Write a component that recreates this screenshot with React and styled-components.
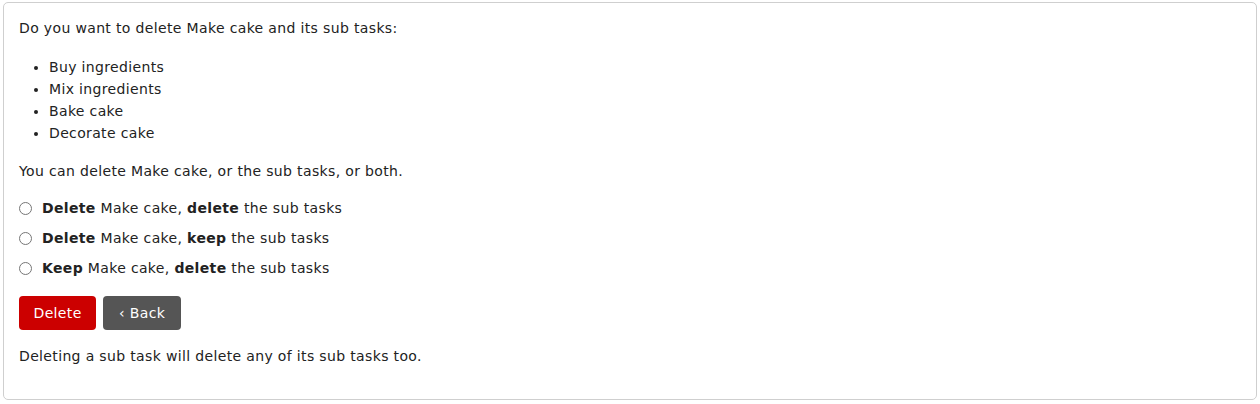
import React from "react";
import styled, { createGlobalStyle } from "styled-components";

const GlobalStyle = createGlobalStyle`
  body {
    margin: 0;
    background: #fff;
    font-family: "DejaVu Sans", "Open Sans", sans-serif;
    font-size: 14px;
    letter-spacing: 0.35px;
    color: #222;
  }
`;

const Card = styled.div`
  margin: 2px 3px 0 3px;
  border: 1px solid #cfcfcf;
  border-radius: 5px;
  padding: 14px 15px 16px;
`;

const Text = styled.p`
  margin: 0 0 ${(p) => p.$gap || 16}px;
  line-height: 22px;
`;

const TaskList = styled.ul`
  margin: 0 0 16px;
  padding-left: 30px;
  line-height: 22px;
`;

const Options = styled.div`
  display: flex;
  flex-direction: column;
  gap: 8px;
  margin-bottom: 17px;
`;

const Option = styled.label`
  display: flex;
  align-items: center;
  line-height: 22px;
  gap: 10px;

  input {
    margin: 0;
    width: 13px;
    height: 13px;
  }
`;

const Actions = styled.div`
  display: flex;
  gap: 7px;
  margin-bottom: 15px;
`;

const Button = styled.button`
  height: 34px;
  padding: 0 ${(p) => (p.$variant === "danger" ? 14.5 : 16)}px;
  border: none;
  border-radius: 4px;
  font-family: inherit;
  font-size: 14px;
  letter-spacing: inherit;
  color: #fff;
  background: ${(p) => (p.$variant === "danger" ? "#cc0000" : "#555555")};
  cursor: pointer;
`;

const options = [
  ["Delete", "delete"],
  ["Delete", "keep"],
  ["Keep", "delete"],
];

export default function App() {
  return (
    <>
      <GlobalStyle />
      <Card>
        <Text $gap={17}>Do you want to delete Make cake and its sub tasks:</Text>
        <TaskList>
          <li>Buy ingredients</li>
          <li>Mix ingredients</li>
          <li>Bake cake</li>
          <li>Decorate cake</li>
        </TaskList>
        <Text $gap={15}>You can delete Make cake, or the sub tasks, or both.</Text>
        <Options>
          {options.map(([a, b], i) => (
            <Option key={i}>
              <input type="radio" name="mode" />
              <span>
                <b>{a}</b> Make cake, <b>{b}</b> the sub tasks
              </span>
            </Option>
          ))}
        </Options>
        <Actions>
          <Button $variant="danger">Delete</Button>
          <Button>‹ Back</Button>
        </Actions>
        <Text>Deleting a sub task will delete any of its sub tasks too.</Text>
      </Card>
    </>
  );
}
